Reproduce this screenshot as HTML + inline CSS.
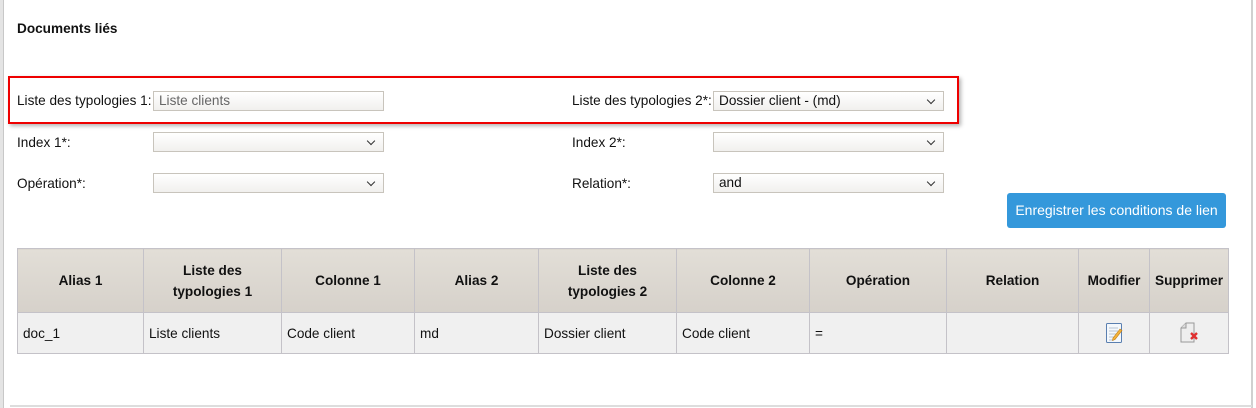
<!DOCTYPE html>
<html><head><meta charset="utf-8"><style>
*{box-sizing:border-box}
body{margin:0;width:1256px;height:408px;background:#fff;font-family:"Liberation Sans",Arial,sans-serif;font-size:13.6px;color:#111;position:relative;overflow:hidden}
.strip{position:absolute;left:0;top:0;width:4px;height:408px;background:#e4e4e4;border-right:1px solid #c8c8c8}
.rb{position:absolute;left:1251px;top:0;width:2px;height:408px;background:#d0d0d0}
.bb{position:absolute;left:10px;top:405px;width:1242px;height:2px;background:#ddd}
.a{position:absolute;white-space:nowrap}
h1{position:absolute;left:17px;top:21px;margin:0;font-size:13.6px;font-weight:bold}
.red{position:absolute;left:8px;top:76px;width:951px;height:48px;border:2px solid #e00;box-shadow:2px 2px 4px rgba(0,0,0,.3)}
.inp{position:absolute;width:231px;height:20px;border:1px solid #c8c4bc;background:linear-gradient(#fff,#f1f0ee);font-size:13.6px;padding:1px 5px;line-height:16px}
.sel::after{content:"";position:absolute;right:9px;top:5px;width:5px;height:5px;border-right:1.3px solid #333;border-bottom:1.3px solid #333;transform:rotate(45deg)}
.btn{position:absolute;left:1007px;top:193px;width:219px;height:35px;background:#3498db;border-radius:3px;color:#fff;font-size:14px;line-height:35px;text-align:center}
table{position:absolute;left:17px;top:248px;border-collapse:collapse;width:1212px}
td,th{border:1px solid #c4c2c8;padding:0 5px}
th{background:linear-gradient(#e2ded7,#d6d1ca);height:64px;font-weight:bold;text-align:center;line-height:21px}
td{background:#f0f0f0;height:41px}
</style></head><body>
<div class="strip"></div><div class="rb"></div><div class="bb"></div>
<h1>Documents liés</h1>
<div class="red"></div>
<div class="a" style="left:17px;top:93px">Liste des typologies 1:</div>
<div class="inp" style="left:153px;top:91px;color:#666">Liste clients</div>
<div class="a" style="left:572px;top:93px">Liste des typologies 2*:</div>
<div class="inp sel" style="left:713px;top:91px">Dossier client - (md)</div>
<div class="a" style="left:17px;top:135px">Index 1*:</div>
<div class="inp sel" style="left:153px;top:132px"></div>
<div class="a" style="left:572px;top:135px">Index 2*:</div>
<div class="inp sel" style="left:713px;top:132px"></div>
<div class="a" style="left:17px;top:176px">Opération*:</div>
<div class="inp sel" style="left:153px;top:173px"></div>
<div class="a" style="left:572px;top:176px">Relation*:</div>
<div class="inp sel" style="left:713px;top:173px">and</div>
<div class="btn">Enregistrer les conditions de lien</div>
<table>
<tr><th style="width:126px">Alias 1</th><th style="width:138px">Liste des<br>typologies 1</th><th style="width:133px">Colonne 1</th><th style="width:124px">Alias 2</th><th style="width:138px">Liste des<br>typologies 2</th><th style="width:133px">Colonne 2</th><th style="width:137px">Opération</th><th style="width:132px">Relation</th><th style="width:71px">Modifier</th><th>Supprimer</th></tr>
<tr><td>doc_1</td><td>Liste clients</td><td>Code client</td><td>md</td><td>Dossier client</td><td>Code client</td><td>=</td><td></td>
<td style="text-align:center"><svg width="18" height="22" viewBox="0 0 18 22" style="vertical-align:middle"><rect x="1.5" y="1.5" width="15" height="19" rx="1" fill="#f4f8fc" stroke="#5a7fb0"/><path d="M4 6h9M4 9h9M4 12h7M4 15h5M4 18h5" stroke="#b8c4d2"/><path d="M8 16l7-9 2 1.5-7 9-2.5 1z" fill="#f2b33c" stroke="#c07a10" stroke-width=".6"/></svg></td>
<td style="text-align:center"><svg width="22" height="22" viewBox="0 0 22 22" style="vertical-align:middle"><path d="M3 6l5-5h8v19H3z" fill="#eee" stroke="#999"/><path d="M3 6h5V1" fill="#ddd" stroke="#999"/><path d="M13 11l6 6M19 11l-6 6" stroke="#e03030" stroke-width="2.4"/></svg></td></tr>
</table>
</body></html>
